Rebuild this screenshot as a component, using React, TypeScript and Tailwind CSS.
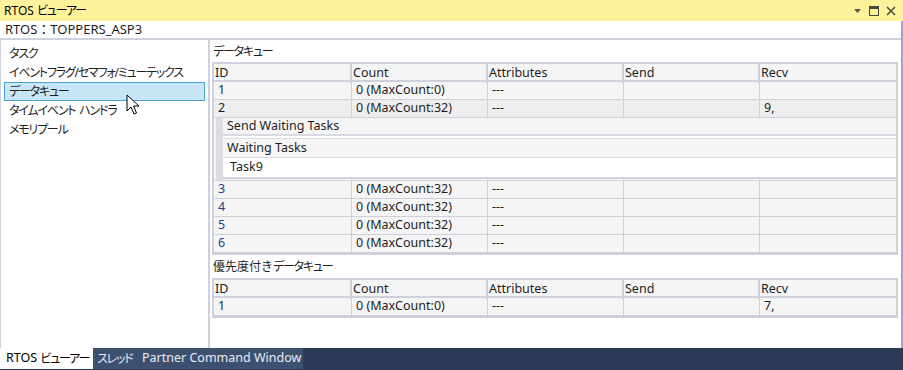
import React from 'react';

const font = { fontFamily: '"Noto Sans", "Noto Sans CJK JP", sans-serif' };

type Row = { id: string; count: string; attr: string; send: string; recv: string; blue?: boolean; dark?: boolean };

const Cell: React.FC<{ children?: React.ReactNode }> = ({ children }) => (
  <div className="h-full border-r border-[#cfd0dd] last:border-r-0 px-[2px] flex items-center whitespace-nowrap overflow-hidden">{children}</div>
);

const GridRow: React.FC<{ cells: React.ReactNode[]; className?: string }> = ({ cells, className }) => (
  <div className={`grid grid-cols-[138px_136px_136px_136px_1fr] h-[18px] border-b border-[#cfd0dd] ${className ?? ''}`}>
    {cells.map((c, i) => (
      <Cell key={i}>{c}</Cell>
    ))}
  </div>
);

const Header = () => (
  <div className="grid grid-cols-[138px_136px_136px_136px_1fr] h-[18px] border-b-2 border-[#cfd0dd] bg-[#f5f5f5]">
    {['ID', 'Count', 'Attributes', 'Send', 'Recv'].map((h) => (
      <div key={h} className="h-full border-r-2 border-[#cfd0dd] last:border-r-0 px-[1px] flex items-center text-[#1e1e1e]">
        {h}
      </div>
    ))}
  </div>
);

const DataRow: React.FC<{ r: Row }> = ({ r }) => (
  <GridRow
    className={r.dark ? 'bg-[#eeeeee]' : 'bg-[#f5f5f5]'}
    cells={[
      <span className={`pl-[2px] ${r.blue ? 'text-[#1f3f8c]' : ''}`}>{r.id}</span>,
      <span className="pl-[2px]">{r.count}</span>,
      <span className="pl-[2px]">{r.attr}</span>,
      r.send,
      <span className="pl-[2px]">{r.recv}</span>,
    ]}
  />
);

// narrow kana, close to Meiryo UI widths
const Jp: React.FC<{ children: React.ReactNode }> = ({ children }) => (
  <span className="text-[12px] [font-feature-settings:'palt'] tracking-[-1.2px] whitespace-pre">{children}</span>
);

const ListItem: React.FC<{ label: string; selected?: boolean }> = ({ label, selected }) => (
  <div
    className={`h-[19px] flex items-center pl-[4px] mx-[3px] border whitespace-nowrap ${
      selected ? 'bg-[#c9e6f6] border-[#4ba3d6]' : 'border-transparent'
    }`}
  >
    <Jp>{label}</Jp>
  </div>
);

const Cursor = () => (
  <svg className="absolute left-[126px] top-[94px]" width="14" height="22" viewBox="0 0 14 22">
    <path d="M1 1 L1 17 L5 13 L8 20 L10.5 19 L7.5 12 L13 12 Z" fill="#fff" stroke="#000" strokeWidth="1" strokeLinejoin="miter" />
  </svg>
);

export default function App() {
  const rows1: Row[] = [
    { id: '1', count: '0 (MaxCount:0)', attr: '---', send: '', recv: '' },
    { id: '2', count: '0 (MaxCount:32)', attr: '---', send: '', recv: '9,', dark: true },
  ];
  const rows2: Row[] = ['3', '4', '5', '6'].map((id) => ({
    id,
    count: '0 (MaxCount:32)',
    attr: '---',
    send: '',
    recv: '',
    blue: true,
  }));

  return (
    <div className="w-[903px] h-[370px] bg-[#2b3a55] flex flex-col text-[12.5px] text-[#1e1e1e] relative overflow-hidden" style={font}>
      {/* title bar */}
      <div className="h-[21px] bg-[#fff29d] flex items-center justify-between pl-[4px] pr-[7px] shrink-0">
        <span className="text-black text-[12px]">RTOS <Jp>ビューアー</Jp></span>
        <div className="flex items-center gap-[7px]">
          <svg width="9" height="6" viewBox="0 0 9 6"><path d="M1 1 H8 L4.5 5 Z" fill="#5a5a4a" /></svg>
          <svg width="10" height="10" viewBox="0 0 10 10"><rect x="0.5" y="0.5" width="9" height="9" fill="none" stroke="#4a4a3a" /><rect x="0" y="0" width="10" height="3" fill="#4a4a3a" /></svg>
          <svg width="10" height="10" viewBox="0 0 10 10"><path d="M1 1 L9 9 M9 1 L1 9" stroke="#4a4a3a" strokeWidth="1.5" /></svg>
        </div>
      </div>

      <div className="flex-1 bg-white border-r-2 border-[#9aa6c9] flex flex-col min-h-0">
        <div className="h-[19px] flex items-center pl-[5px] pt-[1px] text-[13px] border-b-2 border-[#cfd0dd] shrink-0">RTOS：TOPPERS_ASP3</div>

        <div className="flex-1 flex min-h-0">
          {/* left list */}
          <div className="w-[210px] border-l border-[#cfd0dd] border-r-2 border-r-[#cfd0dd] pt-[4px] shrink-0">
            <ListItem label="タスク" />
            <ListItem label="イベントフラグ/セマフォ/ミューテックス" />
            <ListItem label="データキュー" selected />
            <ListItem label="タイムイベント  ハンドラ" />
            <ListItem label="メモリプール" />
          </div>

          {/* right content */}
          <div className="flex-1 pl-[2px] pr-[3px]">
            <div className="h-[22px] flex items-end pb-[1px] pl-[1px]"><Jp>データキュー</Jp></div>
            <div className="border-2 border-[#cfd0dd]">
              <Header />
              {rows1.map((r) => (
                <DataRow key={r.id} r={r} />
              ))}
              {/* expanded detail */}
              <div className="flex border-b border-[#cfd0dd] bg-[#f5f5f5]">
                <div className="w-[9px] bg-[#f5f5f5] pl-[2px]">
                  <div className="w-[7px] h-full bg-[#dcdce2]" />
                </div>
                <div className="flex-1 flex flex-col">
                  <div className="h-[18px] flex items-center pl-[4px] border-b-2 border-[#d9d9e3]">Send Waiting Tasks</div>
                  <div className="h-[2px] bg-white" />
                  <div className="h-[20px] flex items-center pl-[4px] border-b border-t border-[#d9d9e3]">Waiting Tasks</div>
                  <div className="h-[21px] flex items-center pl-[7px] bg-white border-b-2 border-[#cfd0dd]">Task9</div>
                  <div className="h-[1px]" />
                </div>
              </div>
              {rows2.map((r) => (
                <DataRow key={r.id} r={r} />
              ))}
            </div>

            <div className="h-[23px] flex items-end pb-[2px] pl-[1px] text-[12px]">
              <span>優先度付き</span>
              <Jp>データキュー</Jp>
            </div>
            <div className="border-2 border-[#cfd0dd]">
              <Header />
              <DataRow r={{ id: '1', count: '0 (MaxCount:0)', attr: '---', send: '', recv: '7,' }} />
            </div>
          </div>
        </div>
      </div>

      {/* bottom tabs */}
      <div className="h-[22px] flex items-stretch shrink-0 pb-[1px] whitespace-nowrap text-[12.5px]">
        <div className="bg-white text-black px-[6px] flex items-center w-[93px]">RTOS&nbsp;<Jp>ビューアー</Jp></div>
        <div className="bg-[#3e506f] text-[#e6ebf3] px-[4px] flex items-center w-[44px]"><Jp>スレッド</Jp></div>
        <div className="bg-[#3e506f] text-[#e6ebf3] px-[5px] flex items-center w-[166px]">Partner Command Window</div>
      </div>

      <Cursor />
    </div>
  );
}
